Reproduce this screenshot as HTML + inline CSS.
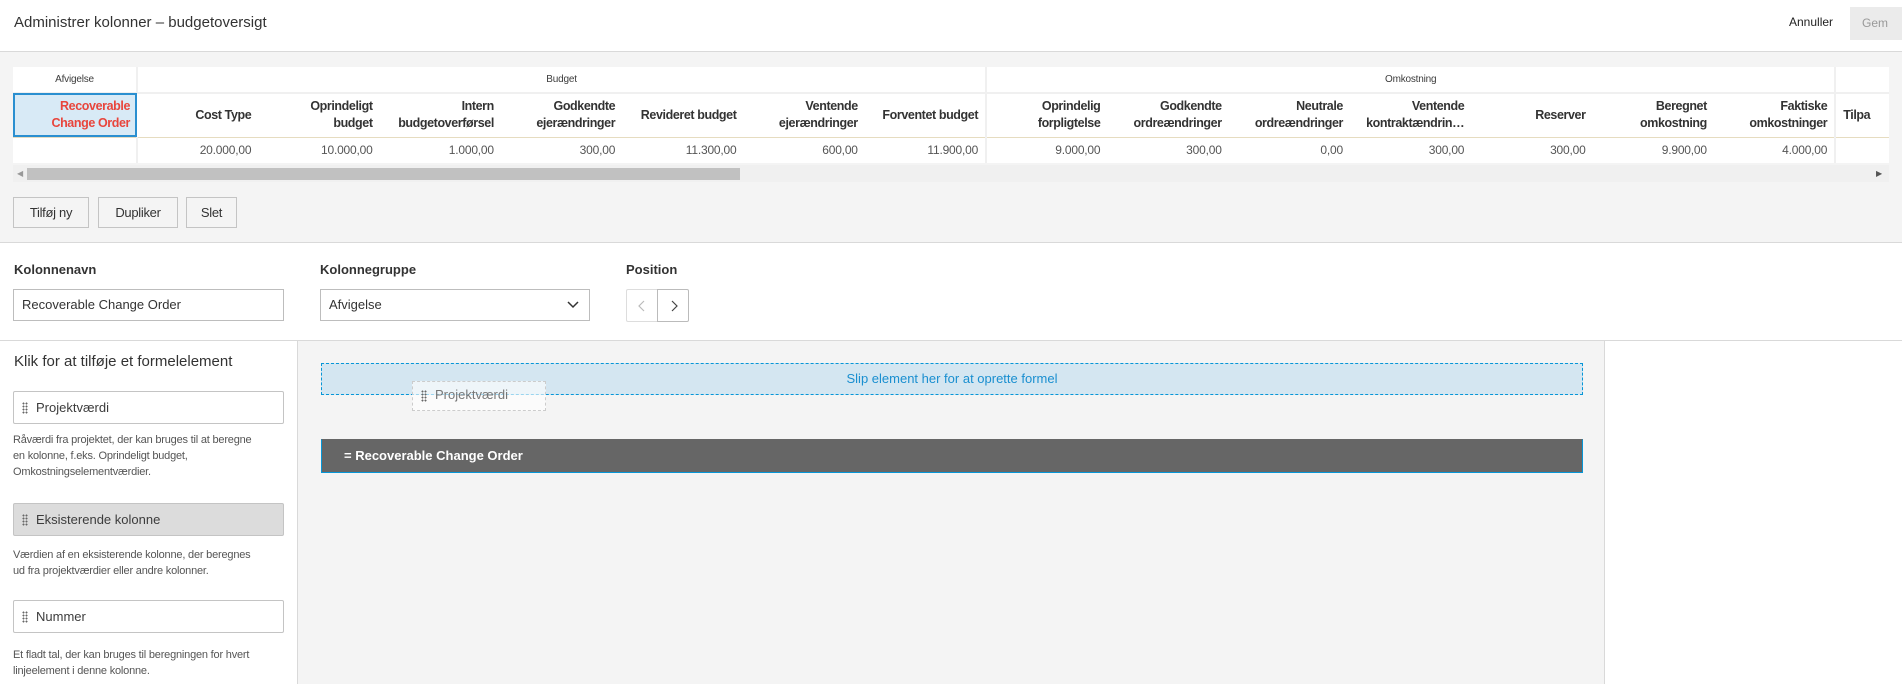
<!DOCTYPE html>
<html><head><meta charset="utf-8"><style>
*{box-sizing:border-box;margin:0;padding:0}
body{width:1902px;height:684px;overflow:hidden;background:#fff;font-family:"Liberation Sans",sans-serif;color:#3c3c3c;position:relative}
.abs{position:absolute}
.hdr{left:0;top:0;width:1902px;height:52px;border-bottom:1px solid #d9d9d9;background:#fff}
.grey1{left:0;top:52px;width:1902px;height:191px;background:#f4f4f4;border-bottom:1px solid #d9d9d9}
table{border-collapse:collapse;position:absolute;left:13px;top:67px;background:#fff;table-layout:fixed;width:1876px}
td{font-size:12px;text-align:right;padding:0 7px;overflow:hidden;white-space:nowrap;letter-spacing:-0.2px}
.g td{height:26px;text-align:center;font-size:10px;border-bottom:2px solid #f0f0f0}
.h td{height:44px;font-weight:bold;font-size:12.5px;line-height:17px;color:#333;white-space:normal;border-bottom:1px solid #e6dcc0;letter-spacing:-0.4px}
.d td{height:26px;color:#555}
.btn{border:1px solid #c4c4c4;background:#f4f4f4;font-size:13px;text-align:center;line-height:29px;height:31px;color:#333;letter-spacing:-0.3px}
.lbl{font-size:13px;font-weight:bold;color:#333}
.inp{border:1px solid #bdbdbd;background:#fff;height:32px;font-size:13px;line-height:30px;padding-left:8px;color:#333}
.box{left:13px;width:271px;height:33px;border:1px solid #c4c4c4;background:#fff;font-size:13px;line-height:31px;padding-left:22px;border-radius:2px}
.dots{position:absolute;left:8px;top:10px;width:6px;height:12px;background-image:radial-gradient(circle,#666 0.9px,transparent 1.1px);background-size:3px 3px}
.desc{left:13px;width:285px;font-size:11px;line-height:16px;color:#555;letter-spacing:-0.2px}
</style></head><body>
<div class="abs hdr"></div>
<div class="abs" style="left:14px;top:14px;font-size:15px;color:#333">Administrer kolonner – budgetoversigt</div>
<div class="abs" style="left:1789px;top:15px;font-size:12px;color:#222">Annuller</div>
<div class="abs" style="left:1850px;top:7px;width:52px;height:33px;background:#ebebeb;color:#999;font-size:12px;line-height:33px;padding-left:12px">Gem</div>
<div class="abs grey1"></div>
<table>
<colgroup><col style="width:124px"><col span="14" style="width:121.3px"><col style="width:54px"></colgroup>
<tr class="g"><td style="border-right:2px solid #f0f0f0">Afvigelse</td><td colspan="7" style="border-right:2px solid #f0f0f0">Budget</td><td colspan="7" style="border-right:2px solid #f0f0f0">Omkostning</td><td></td></tr>
<tr class="h"><td style="background:#d8eaf6;outline:2px solid #2a8fd0;outline-offset:-2px;color:#e8453c;font-weight:bold">Recoverable Change Order</td><td>Cost Type</td><td>Oprindeligt<br>budget</td><td>Intern budgetoverførsel</td><td>Godkendte ejerændringer</td><td style="white-space:nowrap">Revideret budget</td><td>Ventende ejerændringer</td><td style="border-right:2px solid #f0f0f0;white-space:nowrap">Forventet budget</td><td>Oprindelig forpligtelse</td><td>Godkendte ordreændringer</td><td>Neutrale ordreændringer</td><td>Ventende kontraktændrin…</td><td>Reserver</td><td>Beregnet omkostning</td><td style="border-right:2px solid #f0f0f0">Faktiske omkostninger</td><td style="text-align:left">Tilpa</td></tr>
<tr class="d"><td style="border-right:2px solid #f0f0f0"></td><td>20.000,00</td><td>10.000,00</td><td>1.000,00</td><td>300,00</td><td>11.300,00</td><td>600,00</td><td style="border-right:2px solid #f0f0f0">11.900,00</td><td>9.000,00</td><td>300,00</td><td>0,00</td><td>300,00</td><td>300,00</td><td>9.900,00</td><td style="border-right:2px solid #f0f0f0">4.000,00</td><td></td></tr>
</table>
<div class="abs" style="left:13px;top:165px;width:1876px;height:17px;background:#f0f0f0"></div>
<div class="abs" style="left:27px;top:168px;width:713px;height:12px;background:#c1c1c1"></div>
<div class="abs" style="left:17px;top:169px;font-size:8px;color:#999">◀</div>
<div class="abs" style="left:1876px;top:169px;font-size:8px;color:#555">▶</div>
<div class="abs btn" style="left:13px;top:197px;width:76px">Tilføj ny</div>
<div class="abs btn" style="left:98px;top:197px;width:80px">Dupliker</div>
<div class="abs btn" style="left:186px;top:197px;width:51px">Slet</div>
<div class="abs lbl" style="left:14px;top:262px">Kolonnenavn</div>
<div class="abs lbl" style="left:320px;top:262px">Kolonnegruppe</div>
<div class="abs lbl" style="left:626px;top:262px">Position</div>
<div class="abs inp" style="left:13px;top:289px;width:271px">Recoverable Change Order</div>
<div class="abs inp" style="left:320px;top:289px;width:270px">Afvigelse</div>
<svg class="abs" style="left:566px;top:300px" width="14" height="10"><path d="M2 2l5 5 5-5" stroke="#333" stroke-width="1.5" fill="none"/></svg>
<div class="abs" style="left:626px;top:289px;width:31px;height:33px;border:1px solid #ddd;border-right:none;border-radius:2px 0 0 2px"></div>
<div class="abs" style="left:657px;top:289px;width:32px;height:33px;border:1px solid #bbb;border-radius:0 2px 2px 0"></div>
<svg class="abs" style="left:636px;top:299px" width="12" height="14"><path d="M8 2l-5 5 5 5" stroke="#bbb" stroke-width="1.2" fill="none"/></svg>
<svg class="abs" style="left:668px;top:299px" width="12" height="14"><path d="M4 2l5 5-5 5" stroke="#444" stroke-width="1.2" fill="none"/></svg>
<div class="abs" style="left:0;top:340px;width:1902px;height:1px;background:#d9d9d9"></div>
<div class="abs" style="left:297px;top:341px;width:1308px;height:343px;background:#f4f4f4;border-left:1px solid #d9d9d9;border-right:1px solid #d9d9d9"></div>
<div class="abs" style="left:14px;top:353px;font-size:15px;color:#333">Klik for at tilføje et formelelement</div>
<div class="abs box" style="top:391px"><span class="dots"></span>Projektværdi</div>
<div class="abs desc" style="top:432px">Råværdi fra projektet, der kan bruges til at beregne<br>en kolonne, f.eks. Oprindeligt budget,<br>Omkostningselementværdier.</div>
<div class="abs box" style="top:503px;background:#dcdcdc"><span class="dots"></span>Eksisterende kolonne</div>
<div class="abs desc" style="top:547px">Værdien af en eksisterende kolonne, der beregnes<br>ud fra projektværdier eller andre kolonner.</div>
<div class="abs box" style="top:600px"><span class="dots"></span>Nummer</div>
<div class="abs desc" style="top:647px">Et fladt tal, der kan bruges til beregningen for hvert<br>linjeelement i denne kolonne.</div>
<div class="abs" style="left:321px;top:363px;width:1262px;height:32px;background:#d4e6f1;border:1px dashed #0696d7;text-align:center;line-height:30px;font-size:13px;color:#1a8fd0">Slip element her for at oprette formel</div>
<div class="abs" style="left:412px;top:381px;width:134px;height:30px;background:rgba(255,255,255,.6);border:1px dashed #ccc;font-size:13px;line-height:26px;padding-left:22px;color:#777"><span class="dots" style="top:8px"></span>Projektværdi</div>
<div class="abs" style="left:321px;top:439px;width:1262px;height:34px;background:#666;border:1px solid #0696d7;border-top-color:#666;color:#fff;font-weight:bold;font-size:13px;line-height:32px;padding-left:22px">= Recoverable Change Order</div>
</body></html>
